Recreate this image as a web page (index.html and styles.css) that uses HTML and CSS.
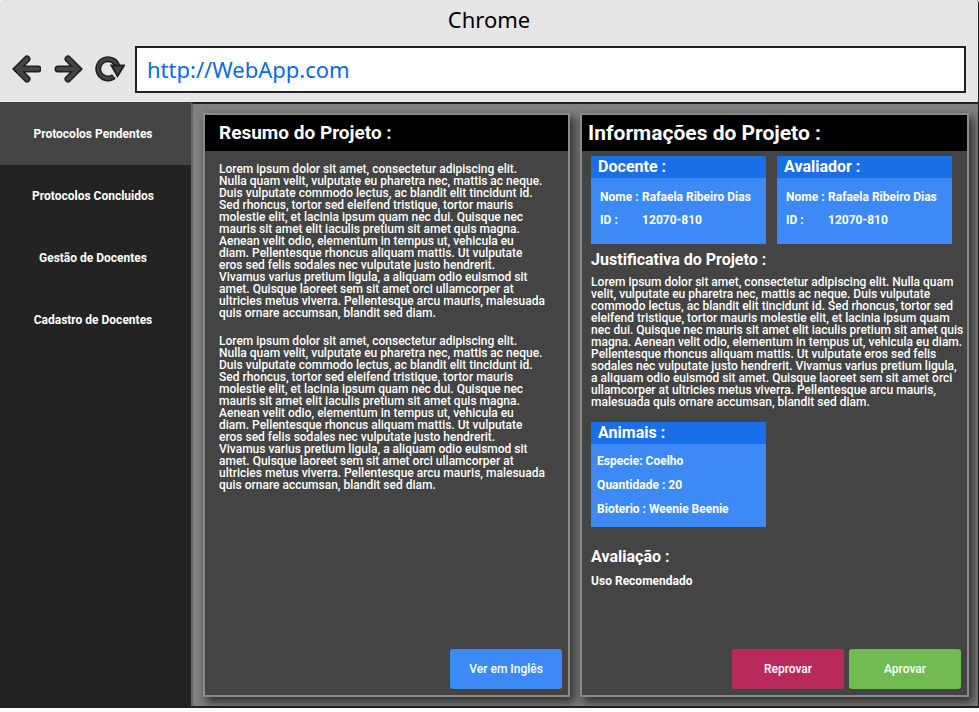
FILE: index.html
```html
<!DOCTYPE html>
<html lang="pt-BR">
<head>
<meta charset="utf-8">
<title>WebApp</title>
<link rel="stylesheet" href="styles.css">
</head>
<body>
<div class="window">
  <header class="chrome">
    <div class="chrome-title">Chrome</div>
    <div class="toolbar">
      <button class="nav-button" type="button" aria-label="Voltar">
        <svg width="32" height="30" viewBox="0 0 32 30"><path class="outline" d="M29 14H8M18 4L8 14L18 24"/><path class="core" d="M29 14H8M18 4L8 14L18 24"/></svg>
      </button>
      <button class="nav-button" type="button" aria-label="Avançar">
        <svg width="32" height="30" viewBox="0 0 32 30"><path class="outline" d="M7 14H27M17 4L27 14L17 24"/><path class="core" d="M7 14H27M17 4L27 14L17 24"/></svg>
      </button>
      <button class="nav-button" type="button" aria-label="Recarregar">
        <svg width="32" height="30" viewBox="0 0 32 30"><path class="reload-outline" d="M21 21.5A9.700 9.700 0 1 1 24.500 12"/><path class="reload-core" d="M20 22A9.700 9.700 0 1 1 24.500 12"/><path class="reload-head" d="M18.500 10.500L31 10.500L24.500 21Z"/></svg>
      </button>
      <input class="address" type="text" aria-label="Endereço" value="http://WebApp.com">
    </div>
  </header>
  <div class="app">
    <nav class="sidebar">
      <a class="side-link active" href="#pendentes">Protocolos Pendentes</a>
      <a class="side-link" href="#concluidos">Protocolos Concluidos</a>
      <a class="side-link" href="#gestao">Gestão de Docentes</a>
      <a class="side-link" href="#cadastro">Cadastro de Docentes</a>
    </nav>
    <main class="content">
      <section class="panel summary">
        <h1 class="panel-title">Resumo do Projeto :</h1>
        <div class="panel-body">
          <p class="text">Lorem ipsum dolor sit amet, consectetur adipiscing elit.<br>Nulla quam velit, vulputate eu pharetra nec, mattis ac neque.<br>Duis vulputate commodo lectus, ac blandit elit tincidunt id.<br>Sed rhoncus, tortor sed eleifend tristique, tortor mauris<br>molestie elit, et lacinia ipsum quam nec dui. Quisque nec<br>mauris sit amet elit iaculis pretium sit amet quis magna.<br>Aenean velit odio, elementum in tempus ut, vehicula eu<br>diam. Pellentesque rhoncus aliquam mattis. Ut vulputate<br>eros sed felis sodales nec vulputate justo hendrerit.<br>Vivamus varius pretium ligula, a aliquam odio euismod sit<br>amet. Quisque laoreet sem sit amet orci ullamcorper at<br>ultricies metus viverra. Pellentesque arcu mauris, malesuada<br>quis ornare accumsan, blandit sed diam.</p>
          <p class="text">Lorem ipsum dolor sit amet, consectetur adipiscing elit.<br>Nulla quam velit, vulputate eu pharetra nec, mattis ac neque.<br>Duis vulputate commodo lectus, ac blandit elit tincidunt id.<br>Sed rhoncus, tortor sed eleifend tristique, tortor mauris<br>molestie elit, et lacinia ipsum quam nec dui. Quisque nec<br>mauris sit amet elit iaculis pretium sit amet quis magna.<br>Aenean velit odio, elementum in tempus ut, vehicula eu<br>diam. Pellentesque rhoncus aliquam mattis. Ut vulputate<br>eros sed felis sodales nec vulputate justo hendrerit.<br>Vivamus varius pretium ligula, a aliquam odio euismod sit<br>amet. Quisque laoreet sem sit amet orci ullamcorper at<br>ultricies metus viverra. Pellentesque arcu mauris, malesuada<br>quis ornare accumsan, blandit sed diam.</p>
        </div>
        <div class="actions">
          <button class="action blue" type="button">Ver em Inglês</button>
        </div>
      </section>
      <section class="panel info">
        <h1 class="panel-title">Informações do Projeto :</h1>
        <div class="panel-body">
          <div class="cards">
            <article class="card">
              <h2 class="card-title">Docente :</h2>
              <dl class="fields">
                <dt>Nome :</dt><dd>Rafaela Ribeiro Dias</dd>
                <dt>ID :</dt><dd>12070-810</dd>
              </dl>
            </article>
            <article class="card">
              <h2 class="card-title">Avaliador :</h2>
              <dl class="fields">
                <dt>Nome :</dt><dd>Rafaela Ribeiro Dias</dd>
                <dt>ID :</dt><dd>12070-810</dd>
              </dl>
            </article>
          </div>
          <h2 class="heading">Justificativa do Projeto :</h2>
          <p class="text">Lorem ipsum dolor sit amet, consectetur adipiscing elit. Nulla quam<br>velit, vulputate eu pharetra nec, mattis ac neque. Duis vulputate<br>commodo lectus, ac blandit elit tincidunt id. Sed rhoncus, tortor sed<br>eleifend tristique, tortor mauris molestie elit, et lacinia ipsum quam<br>nec dui. Quisque nec mauris sit amet elit iaculis pretium sit amet quis<br>magna. Aenean velit odio, elementum in tempus ut, vehicula eu diam.<br>Pellentesque rhoncus aliquam mattis. Ut vulputate eros sed felis<br>sodales nec vulputate justo hendrerit. Vivamus varius pretium ligula,<br>a aliquam odio euismod sit amet. Quisque laoreet sem sit amet orci<br>ullamcorper at ultricies metus viverra. Pellentesque arcu mauris,<br>malesuada quis ornare accumsan, blandit sed diam.</p>
          <div class="cards">
            <article class="card">
              <h2 class="card-title">Animais :</h2>
              <ul class="facts">
                <li>Especie: Coelho</li>
                <li>Quantidade : 20</li>
                <li>Bioterio : Weenie Beenie</li>
              </ul>
            </article>
          </div>
          <h2 class="heading review">Avaliação :</h2>
          <p class="verdict">Uso Recomendado</p>
        </div>
        <div class="actions">
          <button class="action red" type="button">Reprovar</button>
          <button class="action green" type="button">Aprovar</button>
        </div>
      </section>
    </main>
  </div>
</div>
</body>
</html>
```
FILE: styles.css
```css
* {
  box-sizing: border-box;
}

body {
  margin: 0;
  background: #fff;
  color: #fff;
  font-family: Roboto, "Noto Sans", sans-serif;
  font-size: 12px;
}

h1, h2, p, ul, dl, dd {
  margin: 0;
  padding: 0;
}

.window {
  display: flex;
  flex-direction: column;
  min-height: calc(100vh - 4px);
  border-right: 1px solid #231f20;
  border-bottom: 2px solid #231f20;
  border-radius: 3px 3px 0 0;
}

.chrome {
  background: #e6e6e6;
  border-radius: 3px 3px 0 0;
  padding-bottom: 9px;
}

.chrome-title {
  height: 46px;
  line-height: 38px;
  text-align: center;
  font-family: "Noto Sans", sans-serif;
  font-size: 22px;
  color: #000;
}

.toolbar {
  display: flex;
  align-items: center;
  gap: 10px;
  padding: 0 12px 0 9px;
}

.nav-button {
  flex: none;
  display: flex;
  padding: 0;
  border: 0;
  background: none;
}

.nav-button svg {
  fill: none;
  stroke-linecap: round;
  stroke-linejoin: miter;
}

.outline {
  stroke: #231f20;
  stroke-width: 7;
}

.core {
  stroke: #444;
  stroke-width: 4;
}

.reload-outline {
  stroke: #231f20;
  stroke-width: 6;
  stroke-linecap: butt;
}

.reload-core {
  stroke: #444;
  stroke-width: 3;
  stroke-linecap: butt;
}

.reload-head {
  fill: #444;
  stroke: #231f20;
  stroke-width: 2;
}

.address {
  flex: 1;
  min-width: 0;
  height: 47px;
  padding: 0 10px 2px;
  border: 2px solid #231f20;
  border-radius: 0;
  background: #fff;
  color: #0a6ae8;
  font: 22px "Noto Sans", sans-serif;
}

.app {
  flex: 1;
  display: flex;
}

.sidebar {
  flex: none;
  width: 191px;
  background: #232323;
}

.side-link {
  display: flex;
  align-items: center;
  justify-content: center;
  height: 62px;
  padding-right: 5px;
  color: #fff;
  font-weight: 700;
  text-decoration: none;
}

.side-link.active {
  height: 63px;
  background: #444;
}

.content {
  flex: 1;
  display: flex;
  gap: 10px;
  padding: 9px 9px 9px 10px;
  border-top: 2px solid #231f20;
  border-left: 2px solid #666;
  background: #808080;
}

.panel {
  display: flex;
  flex-direction: column;
  min-width: 0;
  border: 2px solid #8a8a8a;
  background: #444;
  box-shadow: 4px 5px 9px 1px rgba(0, 0, 0, 0.6);
}

.summary {
  flex: 367 1 0;
}

.info {
  flex: 389 1 0;
}

.panel-title {
  padding-left: 14px;
  background: #000;
  font-size: 19px;
  line-height: 36px;
}

.info .panel-title {
  padding-left: 6px;
  font-size: 21px;
}

.panel-body {
  flex: 1;
}

.summary .panel-body {
  display: flex;
  flex-direction: column;
  gap: 16px;
  padding: 12px 0 0 14px;
}

.info .panel-body {
  padding: 5px 0 0 9px;
}

.text {
  font-weight: 500;
  line-height: 12px;
  white-space: nowrap;
}

.cards {
  display: grid;
  grid-template-columns: 1fr 1fr;
  gap: 11px;
  padding-right: 15px;
}

.card {
  background: #3d8af7;
}

.card-title {
  padding-left: 7px;
  background: #1a6fe8;
  font-size: 16px;
  line-height: 22px;
}

.fields {
  display: grid;
  grid-template-columns: 42px 1fr;
  padding: 8px 0 12px 9px;
  font-weight: 700;
  line-height: 23px;
  white-space: nowrap;
}

.heading {
  font-size: 16px;
  line-height: 32px;
}

.info .text {
  padding-bottom: 14px;
}

.facts {
  padding: 5px 0 6px 6px;
  font-weight: 700;
  line-height: 24px;
  list-style: none;
}

.review {
  padding-top: 14px;
}

.verdict {
  font-weight: 700;
  line-height: 16px;
}

.actions {
  display: flex;
  justify-content: flex-end;
  gap: 5px;
  padding: 0 6px 6px;
}

.action {
  width: 112px;
  height: 40px;
  padding: 0;
  border: 0;
  border-radius: 3px;
  color: #fff;
  font: 500 12px Roboto, "Noto Sans", sans-serif;
}

.blue {
  background: #3d8af7;
}

.red {
  background: #b82a5b;
}

.green {
  background: #72bb53;
}
```
